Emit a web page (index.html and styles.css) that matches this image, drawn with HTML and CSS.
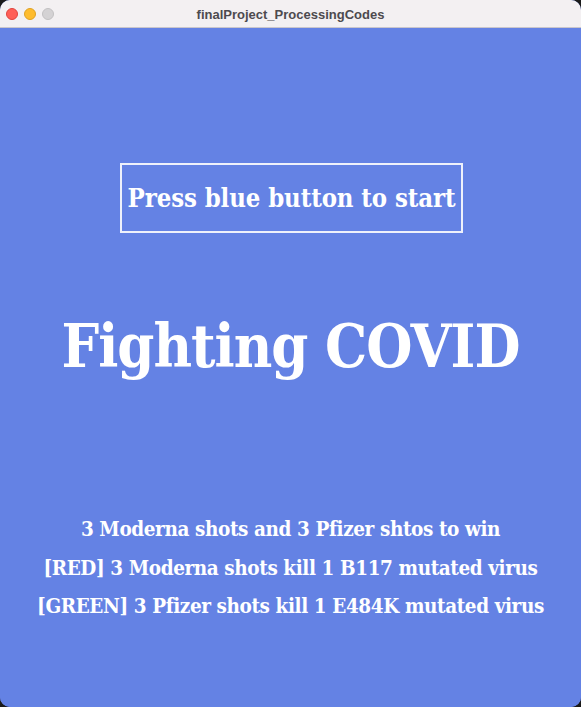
FILE: index.html
```html
<!DOCTYPE html>
<html>
<head>
<meta charset="utf-8">
<link rel="stylesheet" href="styles.css">
</head>
<body>
<div class="window">
  <div class="titlebar">
    <div class="lights">
      <span class="light red"></span>
      <span class="light yellow"></span>
      <span class="light gray"></span>
    </div>
    <div class="title">finalProject_ProcessingCodes</div>
  </div>
  <div class="canvas">
    <div class="start-box">Press blue button to start</div>
    <h1 class="headline">Fighting COVID</h1>
    <div class="rules">
      <p class="rule">3 Moderna shots and 3 Pfizer shtos to win</p>
      <p class="rule">[RED] 3 Moderna shots kill 1 B117 mutated virus</p>
      <p class="rule">[GREEN] 3 Pfizer shots kill 1 E484K mutated virus</p>
    </div>
  </div>
</div>
</body>
</html>
```

FILE: styles.css
```css
html, body {
  margin: 0;
  padding: 0;
  background: #1a1a1a;
}
.window {
  width: 581px;
  height: 707px;
  display: flex;
  flex-direction: column;
  border-radius: 10px;
  overflow: hidden;
  background: #6482e4;
}
.titlebar {
  height: 27px;
  flex: none;
  background: #f3f0f2;
  border-bottom: 1px solid #c9c6cc;
  position: relative;
  display: flex;
  align-items: center;
  justify-content: center;
}
.lights {
  position: absolute;
  left: 6px;
  top: 8px;
  display: flex;
  gap: 6px;
}
.light {
  width: 12px;
  height: 12px;
  border-radius: 50%;
  display: block;
}
.red { background: #fe5f57; border: 0.5px solid #e0443e; box-sizing: border-box; }
.yellow { background: #febc2e; border: 0.5px solid #dea123; box-sizing: border-box; }
.gray { background: #d4d2d4; border: 0.5px solid #c2c0c2; box-sizing: border-box; }
.title {
  font-family: "Liberation Sans", Arial, sans-serif;
  font-weight: bold;
  font-size: 13px;
  color: #4d4a4e;
  margin-top: 1px;
}
.canvas {
  flex: 1;
  background: #6482e4;
  display: flex;
  flex-direction: column;
  align-items: center;
  color: #ffffff;
  font-family: "DejaVu Serif Condensed", "DejaVu Serif", serif;
  font-weight: bold;
}
.start-box {
  margin-top: 135px;
  margin-left: 2px;
  width: 339px;
  height: 66px;
  border: 2px solid #eef1fb;
  box-sizing: content-box;
  display: flex;
  align-items: center;
  justify-content: center;
  font-size: 25.5px;
  letter-spacing: -0.1px;
}
.headline {
  margin: 74px 0 0 0;
  font-size: 59px;
  line-height: 80px;
  letter-spacing: -1px;
  font-weight: bold;
}
.rules {
  margin-top: 123px;
  display: flex;
  flex-direction: column;
  align-items: center;
  gap: 0;
}
.rule {
  margin: 0;
  font-size: 20.5px;
  line-height: 38.5px;
  letter-spacing: -0.4px;
}
```
